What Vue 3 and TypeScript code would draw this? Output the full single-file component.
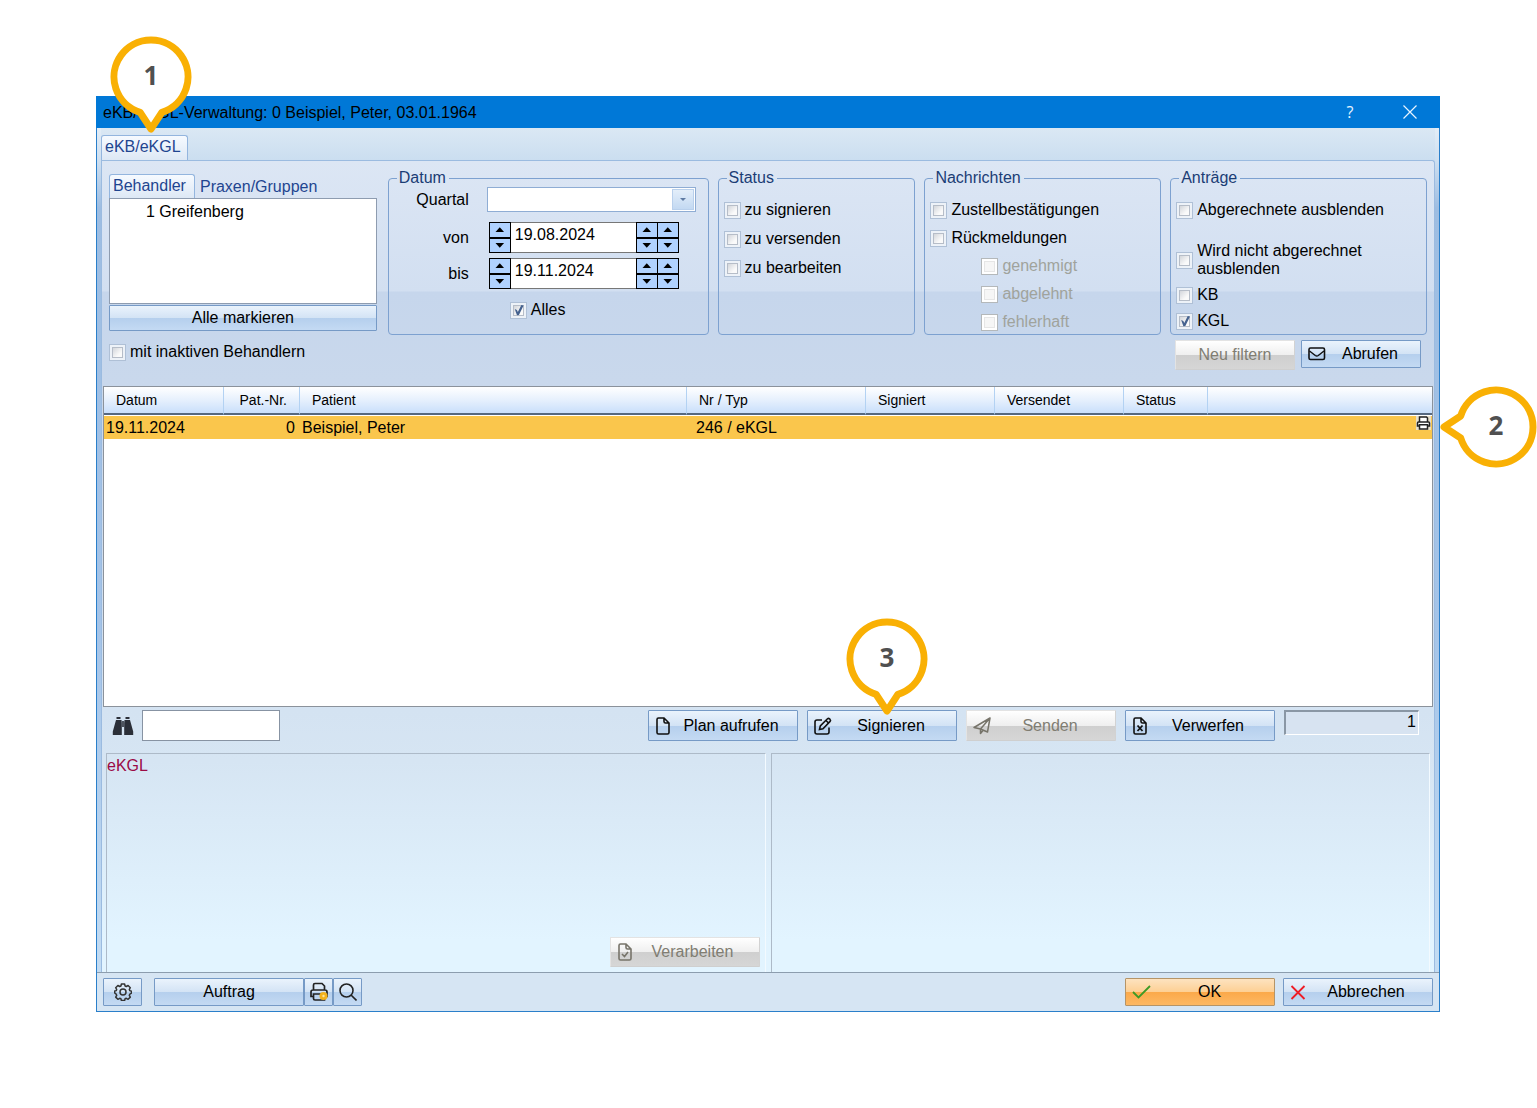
<script setup lang="ts">
import { reactive, ref } from 'vue'

interface Option {
  id: string
  label: string
  checked: boolean
  disabled?: boolean
}

interface Plan {
  date: string
  patientNo: number
  patient: string
  type: string
  signed: string
  sent: string
  status: string
}

const statusOptions = reactive<Option[]>([
  { id: 'st-sign', label: 'zu signieren', checked: false },
  { id: 'st-send', label: 'zu versenden', checked: false },
  { id: 'st-edit', label: 'zu bearbeiten', checked: false },
])

const messageOptions = reactive<Option[]>([
  { id: 'ms-delivery', label: 'Zustellbestätigungen', checked: false },
  { id: 'ms-reply', label: 'Rückmeldungen', checked: false },
  { id: 'ms-approved', label: 'genehmigt', checked: false, disabled: true },
  { id: 'ms-rejected', label: 'abgelehnt', checked: false, disabled: true },
  { id: 'ms-faulty', label: 'fehlerhaft', checked: false, disabled: true },
])

const requestOptions = reactive<Option[]>([
  { id: 'rq-billed', label: 'Abgerechnete ausblenden', checked: false },
  { id: 'rq-unbilled', label: 'Wird nicht abgerechnet ausblenden', checked: false },
  { id: 'rq-kb', label: 'KB', checked: false },
  { id: 'rq-kgl', label: 'KGL', checked: true },
])

const dates = reactive([
  { id: 'date-from', label: 'von', value: '19.08.2024' },
  { id: 'date-to', label: 'bis', value: '19.11.2024' },
])

const plans: Plan[] = [
  { date: '19.11.2024', patientNo: 0, patient: 'Beispiel, Peter', type: '246 / eKGL', signed: '', sent: '', status: '' },
]

const quarter = ref('')
const allDates = ref(true)
const inactive = ref(false)
const search = ref('')
</script>

<template>
  <main class="stage">
    <section class="window">
      <header class="titlebar">
        <h1>eKB/eKGL-Verwaltung: 0 Beispiel, Peter, 03.01.1964</h1>
        <button type="button" class="help" aria-label="Hilfe">?</button>
        <button type="button" class="close" aria-label="Schließen">
          <svg width="14" height="14" viewBox="0 0 14 14"><path d="M.5 .5l13 13M13.5 .5l-13 13" fill="none" stroke="#e8f4ff" stroke-width="1.2" /></svg>
        </button>
      </header>

      <div class="body">
        <nav class="strip"><button type="button" class="tab">eKB/eKGL</button></nav>

        <div class="panel">
          <div class="filters">
            <div class="doctors">
              <div class="subtabs">
                <button type="button" class="tab">Behandler</button>
                <button type="button" class="tab idle">Praxen/Gruppen</button>
              </div>
              <ul class="list"><li>1 Greifenberg</li></ul>
              <button type="button" class="btn mark">Alle markieren</button>
            </div>

            <fieldset>
              <legend>Datum</legend>
              <div class="dates">
                <div class="line">
                  <label for="quarter">Quartal</label>
                  <div class="combo">
                    <select id="quarter" v-model="quarter"><option value=""></option></select>
                    <span class="drop"></span>
                  </div>
                </div>
                <div v-for="d in dates" :key="d.id" class="line">
                  <label :for="d.id">{{ d.label }}</label>
                  <div class="spin">
                    <span class="pair"><button type="button" class="up" aria-label="Tag vor"></button><button type="button" class="down" aria-label="Tag zurück"></button></span>
                    <input :id="d.id" v-model="d.value" type="text" />
                    <span class="pair"><button type="button" class="up" aria-label="Monat vor"></button><button type="button" class="down" aria-label="Monat zurück"></button></span>
                    <span class="pair"><button type="button" class="up" aria-label="Jahr vor"></button><button type="button" class="down" aria-label="Jahr zurück"></button></span>
                  </div>
                </div>
                <label class="check all" for="all-dates"><input id="all-dates" v-model="allDates" type="checkbox" />Alles</label>
              </div>
            </fieldset>

            <fieldset>
              <legend>Status</legend>
              <div class="options status">
                <label v-for="o in statusOptions" :key="o.id" class="check" :for="o.id"><input :id="o.id" v-model="o.checked" type="checkbox" />{{ o.label }}</label>
              </div>
            </fieldset>

            <fieldset>
              <legend>Nachrichten</legend>
              <div class="options messages">
                <label v-for="o in messageOptions" :key="o.id" class="check" :class="{ off: o.disabled }" :for="o.id"><input :id="o.id" v-model="o.checked" type="checkbox" :disabled="o.disabled" />{{ o.label }}</label>
              </div>
            </fieldset>

            <fieldset>
              <legend>Anträge</legend>
              <div class="options requests">
                <label v-for="o in requestOptions" :key="o.id" class="check" :for="o.id"><input :id="o.id" v-model="o.checked" type="checkbox" /><span>{{ o.label }}</span></label>
              </div>
            </fieldset>
          </div>

          <div class="subfilters">
            <label class="check" for="inactive"><input id="inactive" v-model="inactive" type="checkbox" />mit inaktiven Behandlern</label>
            <button type="button" class="btn small tall" disabled><span>Neu filtern</span></button>
            <button type="button" class="btn small">
              <svg class="icon" width="18" height="14" viewBox="0 0 18 14"><rect x="1" y="1" width="15.500" height="11.500" rx="1.500" fill="none" stroke="#111" stroke-width="1.600" /><path d="M1.500 4L7.300 8.500q1.500 1 3 0L16 4" fill="none" stroke="#111" stroke-width="1.500" /></svg>
              <span>Abrufen</span>
            </button>
          </div>

          <div class="results">
            <table>
              <colgroup>
                <col class="c-date" /><col class="c-no" /><col class="c-patient" /><col class="c-type" />
                <col class="c-signed" /><col class="c-sent" /><col class="c-status" /><col />
              </colgroup>
              <thead>
                <tr>
                  <th>Datum</th><th class="num">Pat.-Nr.</th><th>Patient</th><th>Nr / Typ</th>
                  <th>Signiert</th><th>Versendet</th><th>Status</th><th></th>
                </tr>
              </thead>
              <tbody>
                <tr v-for="p in plans" :key="p.type">
                  <td>{{ p.date }}</td>
                  <td class="num">{{ p.patientNo }}</td>
                  <td>{{ p.patient }}</td>
                  <td class="type">{{ p.type }}</td>
                  <td>{{ p.signed }}</td>
                  <td>{{ p.sent }}</td>
                  <td>{{ p.status }}</td>
                  <td class="print">
                    <svg width="15" height="14" viewBox="0 0 15 14"><rect width="15" height="14" fill="#e8e0cc" /><path d="M3.500 6V1h7l1 1v4M3.500 10H1.500V7q0-1 1-1h10q1 0 1 1v3H11.500M3.500 8.700h8V13h-8z" fill="#fff" stroke="#222" stroke-width="1.500" /></svg>
                  </td>
                </tr>
              </tbody>
            </table>
          </div>

          <div class="toolbar">
            <label class="find" for="search" aria-label="Suchen">
              <svg width="22" height="20" viewBox="0 0 22 20" fill="#2b2f38"><path d="M4.500 1h4v2h-4zM13.500 1h4v2h-4zM4 4h5.500l.3 3v12H.8v-3.500zM18 4h-5.500l-.3 3v12h9v-3.500zM10.200 5h1.600v6h-1.600z" /></svg>
            </label>
            <input id="search" v-model="search" type="text" class="search" />
            <div class="actions">
              <button type="button" class="btn">
                <svg class="icon" width="14" height="18" viewBox="0 0 14 18"><path d="M1 2.500q0-1.500 1.500-1.500H8l5 5v9.500q0 1.500-1.500 1.500h-9Q1 17 1 15.500zM8 1v3.500Q8 6 9.500 6H13" fill="none" stroke="#111" stroke-width="1.600" /></svg>
                <span>Plan aufrufen</span>
              </button>
              <div class="anchor">
                <button type="button" class="btn">
                  <svg class="icon" width="18" height="18" viewBox="0 0 18 18" fill="none" stroke="#111" stroke-width="1.600"><path d="M8 3H3Q1 3 1 5v10q0 2 2 2h10q2 0 2-2v-4.500" /><path d="M5.500 12.500l.8-3.500 7.200-7.200q1-.9 2 0l.6.7q.9 1 0 1.900L9 11.700zM12 3.500L14.500 6" /></svg>
                  <span>Signieren</span>
                </button>
                <div class="bubble signing">
                  <svg width="82" height="98" viewBox="0 0 82 98"><path d="M30 76.300A37 37 0 1 1 52 76.300L41 93z" fill="#fff" stroke="#f9b004" stroke-width="7" stroke-linejoin="round" /></svg>
                  <b>3</b>
                </div>
              </div>
              <button type="button" class="btn" disabled>
                <svg class="icon" width="18" height="18" viewBox="0 0 18 18" fill="none" stroke="#77746a" stroke-width="1.500" stroke-linejoin="round"><path d="M1 10.500L17 1l-2.500 14-7-3zM17 1L7.500 12v4.500l2.700-3.300" /></svg>
                <span>Senden</span>
              </button>
              <button type="button" class="btn">
                <svg class="icon" width="14" height="18" viewBox="0 0 14 18"><path d="M1 2.500q0-1.500 1.500-1.500H8l5 5v9.500q0 1.500-1.500 1.500h-9Q1 17 1 15.500zM8 1v3.500Q8 6 9.500 6H13" fill="none" stroke="#111" stroke-width="1.600" /><path d="M4.500 8.500l5 5.500M9.500 8.500l-5 5.500" stroke="#111" stroke-width="1.800" /></svg>
                <span>Verwerfen</span>
              </button>
              <output class="count">1</output>
            </div>
          </div>

          <div class="details">
            <section class="detail">
              <p>eKGL</p>
              <button type="button" class="btn tall" disabled>
                <svg class="icon" width="14" height="18" viewBox="0 0 14 18" fill="none" stroke="#77746a" stroke-width="1.600"><path d="M1 2.500q0-1.500 1.500-1.500H8l5 5v9.500q0 1.500-1.500 1.500h-9Q1 17 1 15.500zM8 1v3.500Q8 6 9.500 6H13M4 11l2.500 2.500L10 9" /></svg>
                <span>Verarbeiten</span>
              </button>
            </section>
            <section class="detail"></section>
          </div>
        </div>
      </div>

      <footer class="footer">
        <button type="button" class="btn tool gear" aria-label="Einstellungen">
          <svg width="18" height="18" viewBox="0 0 18 18" fill="none" stroke="#333" stroke-width="1.500" stroke-linejoin="round"><path d="M7.400 1h3.200l.5 2 1.200.5 1.800-1 2.200 2.200-1 1.800.5 1.100 1.700.6v2l-1.700 1-.5 1.200 1 1.700-2.200 2.200-1.800-1-1.200.5-.5 1.700H7.400l-.5-1.700-1.200-.5-1.800 1-2.200-2.200 1-1.700-.5-1.200L.7 10V8l1.500-.4.500-1.100-1-1.800 2.200-2.200 1.800 1L6.900 3z" /><circle cx="9" cy="9" r="3" /></svg>
        </button>
        <button type="button" class="btn order">Auftrag</button>
        <button type="button" class="btn tool" aria-label="Drucken">
          <svg width="20" height="20" viewBox="0 0 20 20"><path d="M4.500 8V3q0-1.500 1.500-1.500h7L15.500 4v4M4.500 14.500H2V10q0-2 2-2h12q2 0 2 2v4.500h-2.500M4.500 12h11v6H6q-1.500 0-1.500-1.500z" fill="none" stroke="#222" stroke-width="1.700" /><circle cx="14.500" cy="14" r="4" fill="#f2b21d" /><circle cx="14.500" cy="14" r="1.200" fill="#fbe3a0" /></svg>
        </button>
        <button type="button" class="btn tool" aria-label="Vorschau">
          <svg width="18" height="18" viewBox="0 0 18 18" fill="none" stroke="#222" stroke-width="1.600"><circle cx="7.500" cy="7.500" r="6.500" /><path d="M12 12l5.500 5.500" /></svg>
        </button>
        <button type="button" class="btn ok">
          <svg class="icon" width="19" height="14" viewBox="0 0 19 14"><path d="M1 7l5.500 5.500L18 1" fill="none" stroke="#3c9a26" stroke-width="1.800" /></svg>
          <span>OK</span>
        </button>
        <button type="button" class="btn">
          <svg class="icon" width="15" height="15" viewBox="0 0 15 15"><path d="M1 1l13 13M14 1L1 14" fill="none" stroke="#ee1c25" stroke-width="1.800" /></svg>
          <span>Abbrechen</span>
        </button>
      </footer>

      <div class="bubble first">
        <svg width="82" height="98" viewBox="0 0 82 98"><path d="M30 76.300A37 37 0 1 1 52 76.300L41 93z" fill="#fff" stroke="#f9b004" stroke-width="7" stroke-linejoin="round" /></svg>
        <b>1</b>
      </div>
      <div class="bubble row">
        <svg width="98" height="82" viewBox="0 0 98 82"><path d="M21.700 30A37 37 0 1 1 21.700 52L5 41z" fill="#fff" stroke="#f9b004" stroke-width="7" stroke-linejoin="round" /></svg>
        <b>2</b>
      </div>
    </section>
  </main>
</template>

<style>
body {
  margin: 0;
  background: #fff;
}
</style>

<style scoped>
* {
  box-sizing: border-box;
}

.stage {
  padding: 96px 97px 97px 96px;
  font: 16px/18px "Liberation Sans", Arial, sans-serif;
  color: #000;
}

button,
input,
select {
  margin: 0;
  font: inherit;
  color: inherit;
}

.window {
  position: relative;
  border: 1px solid #2a7fca;
  border-top: 0;
  background: #d6e5f3;
}

.titlebar {
  display: flex;
  align-items: center;
  height: 32px;
  margin: 0 -1px;
  padding: 0 16px 0 7px;
  background: #0078d7;
}

.titlebar h1 {
  flex: 1;
  margin: 0;
  padding-top: 2px;
  font-size: 16px;
  font-weight: normal;
}

.titlebar button {
  display: flex;
  align-items: center;
  justify-content: center;
  height: 32px;
  padding: 0;
  border: 0;
  background: none;
  color: #e8f4ff;
}

.help {
  width: 32px;
  margin-right: 30px;
  font-family: "Open Sans", sans-serif;
}

.close {
  width: 28px;
}

.body {
  padding: 0 4px;
  background: linear-gradient(#e3edf7, #cfe0f1 32px, #9dbde2 80px, #a5c4e8 500px, #c3dcf3);
}

.strip {
  display: flex;
  align-items: flex-end;
  height: 32px;
  background: linear-gradient(#dbe8f4, #cbdef0);
}

.tab {
  height: 24px;
  padding: 0 8px 2px 3px;
  border: 1px solid #93b5de;
  border-bottom: 0;
  border-radius: 3px 3px 0 0;
  background: linear-gradient(#f6faff, #dde8f5);
  color: #1f4590;
  white-space: nowrap;
}

.strip .tab {
  height: 25px;
  padding-right: 6px;
}

.tab.idle {
  padding: 0 4px;
  border-color: transparent;
  background: none;
}

.panel {
  padding-top: 8px;
  border: 1px solid #9bbbe0;
  border-bottom: 0;
  border-radius: 0 3px 0 0;
  background: linear-gradient(#dce6f4, #d2dff1 130px, #c6d6ec 131px, #c9d8ec 220px, #d4e3f2 550px, #d6e5f3 600px, #e2f4ff 780px);
}

.filters {
  display: grid;
  grid-template-columns: 270fr 321fr 198fr 237fr 257fr;
  gap: 9px;
  padding: 0 7px;
}

.doctors {
  display: flex;
  flex-direction: column;
  padding: 5px 2px 4px 0;
}

.subtabs {
  display: flex;
}

.list {
  height: 106px;
  margin: 0 0 1px;
  padding: 4px 36px;
  border: 1px solid #8e9cb0;
  background: #fff;
  list-style: none;
}

.btn {
  display: flex;
  align-items: center;
  width: 150px;
  height: 31px;
  padding: 0 6px;
  border: 1px solid #769ac6;
  border-radius: 1px;
  background: linear-gradient(#eaf3fc, #d3e3f5 50%, #b5cfed 51%, #c4daf3);
  white-space: nowrap;
}

.btn span {
  flex: 1;
  text-align: center;
}

.btn .icon {
  flex: 0 0 16px;
  overflow: visible;
}

.btn:disabled {
  border-color: #e3e3e3 #d2d2d2 #cfcfcf #e3e3e3;
  background: linear-gradient(#fff, #efefef 50%, #cfcfcf 51%, #d6d6d6);
  color: #807d72;
}

.btn.mark {
  justify-content: center;
  width: 100%;
  height: 26px;
}

.btn.small {
  width: 120px;
  height: 28px;
}

.btn.tall {
  height: 30px;
}

fieldset {
  display: block;
  min-width: 0;
  margin: 0;
  padding: 0;
  border: 1px solid #7da1d0;
  border-radius: 4px;
}

legend {
  margin-left: 8px;
  padding: 0 3px 0 2px;
  color: #1b3d75;
}

.dates {
  display: flex;
  flex-direction: column;
  gap: 5px;
}

.line {
  display: flex;
  align-items: center;
}

.line:first-child {
  margin-bottom: 5px;
}

.line > label {
  width: 80px;
  margin-right: 20px;
  text-align: right;
}

.combo {
  position: relative;
  width: 209px;
  margin-left: -2px;
}

.combo select {
  display: block;
  width: 100%;
  height: 25px;
  border: 1px solid #8fadd4;
  border-radius: 0;
  background: #fff;
  appearance: none;
}

.drop {
  position: absolute;
  top: 2px;
  right: 2px;
  display: flex;
  align-items: center;
  justify-content: center;
  width: 22px;
  height: 21px;
  border: 1px solid #b9d0ec;
  background: linear-gradient(#e3eefa, #c3d9f2);
  pointer-events: none;
}

.drop::after {
  border: 3px solid transparent;
  border-top: 3px solid #5f7ba3;
  border-bottom: 0;
  content: "";
}

.spin {
  display: flex;
  width: 190px;
  height: 31px;
}

.spin input {
  flex: 1;
  min-width: 0;
  padding: 0 4px 6px;
  border: 1px solid #777;
  border-width: 1px 0;
  background: #fff;
}

.pair {
  display: flex;
  flex: 0 0 22px;
  flex-direction: column;
  border: 1px solid #000;
}

.pair + .pair {
  flex-basis: 21px;
  border-left: 0;
}

.pair button {
  display: flex;
  flex: 1;
  align-items: center;
  justify-content: center;
  padding: 0;
  border: 0;
  background: #b0d2ff;
}

.pair .down {
  border-top: 2px solid #000;
}

.up::after,
.down::after {
  width: 9px;
  height: 5px;
  background: #000;
  clip-path: polygon(50% 0, 100% 100%, 0 100%);
  content: "";
}

.down::after {
  clip-path: polygon(0 0, 100% 0, 50% 100%);
}

.check {
  display: flex;
  align-items: center;
  gap: 4px;
}

.check.all {
  margin: 7px 0 0 121px;
}

.check input {
  position: relative;
  flex: 0 0 17px;
  width: 17px;
  height: 17px;
  border: 1px solid #afc0d6;
  background: #edf2f8;
  appearance: none;
}

.check input::before {
  position: absolute;
  inset: 2px;
  border: 1px solid #b6bdc8;
  background: linear-gradient(135deg, #d3d6db, #fafafa 70%);
  content: "";
}

.check input:checked::after {
  position: absolute;
  inset: 2px;
  background: #45628f;
  clip-path: polygon(18% 40%, 38% 50%, 46% 68%, 78% 5%, 98% 10%, 56% 95%, 38% 98%);
  content: "";
}

.check.off {
  color: #a0a39c;
}

.check.off input {
  border-color: #b4b8ba;
  background: #fff;
}

.check.off input::before {
  border-color: #e6e6e6;
  background: #f6f6f6;
}

.options {
  display: flex;
  flex-direction: column;
  gap: 10px;
  padding: 14px 5px 3px;
}

.options.status {
  gap: 11px;
}

.options .off {
  padding-left: 51px;
}

.options.requests {
  gap: 8px;
}

.requests .check:first-child {
  margin-bottom: 15px;
}

.requests .check span {
  max-width: 195px;
  margin-right: -20px;
}

.subfilters {
  display: flex;
  align-items: flex-start;
  gap: 6px;
  padding: 5px 13px 16px 7px;
}

.subfilters .check {
  height: 24px;
  margin-right: auto;
}

.results {
  min-height: 321px;
  margin: 0 1px;
  border: 1px solid #8b929b;
  background: #fff;
}

table {
  width: 100%;
  border-collapse: separate;
  border-spacing: 0;
  table-layout: fixed;
}

.c-date {
  width: 120px;
}

.c-no {
  width: 76px;
}

.c-patient {
  width: 387px;
}

.c-type {
  width: 179px;
}

.c-signed,
.c-sent {
  width: 129px;
}

.c-status {
  width: 84px;
}

th {
  height: 28px;
  padding: 0 12px;
  border-right: 1px solid #b3d2f3;
  border-bottom: 2px solid #56687f;
  background: linear-gradient(#fff, #e6f0fd 50%, #c9dffb);
  font-size: 14px;
  font-weight: normal;
  text-align: left;
}

th:last-child {
  border-right: 0;
}

td {
  height: 24px;
  padding: 0 3px 0 2px;
  border-top: 1px solid #fff;
  background: #fac64c;
}

td.type {
  padding-left: 9px;
}

td.num {
  padding-right: 5px;
}

.num {
  text-align: right;
}

.print {
  padding: 0 1px 0 0;
  text-align: right;
  vertical-align: top;
}

.print svg {
  display: inline-block;
  vertical-align: top;
}

.toolbar {
  display: flex;
  align-items: flex-start;
  padding: 3px 15px 12px 10px;
}

.find {
  display: flex;
  align-items: center;
  height: 31px;
  margin-right: 8px;
}

.search {
  width: 138px;
  height: 31px;
  padding: 0 4px;
  border: 1px solid #8793a3;
  background: #fff;
}

.actions {
  display: flex;
  gap: 9px;
  margin-left: auto;
}

.anchor {
  position: relative;
}

.count {
  width: 135px;
  height: 25px;
  padding: 1px 2px;
  border: 2px solid #8a97a5;
  border-right: 1px solid #fff;
  border-bottom: 1px solid #fff;
  background: #d7e3f1;
  text-align: right;
}

.details {
  display: flex;
  gap: 5px;
  padding: 0 4px;
}

.detail {
  display: flex;
  flex: 1;
  flex-direction: column;
  justify-content: space-between;
  min-height: 219px;
  padding: 3px 5px 5px 0;
  border: 1px solid #adbac8;
  border-right-color: #f3faff;
  border-bottom: 0;
}

.detail p {
  margin: 0;
  color: #9b0a45;
}

.detail .btn {
  align-self: flex-end;
}

.footer {
  display: flex;
  align-items: center;
  height: 39px;
  padding: 0 6px;
  border-top: 1px solid #8c9dae;
  background: #d6e5f3;
}

.footer .btn {
  height: 28px;
}

.footer .tool {
  justify-content: center;
  width: 29px;
  padding: 0;
}

.footer .tool svg {
  flex: none;
}

.footer .gear {
  width: 39px;
  margin-right: 12px;
}

.footer .order {
  justify-content: center;
}

.footer .ok {
  margin: 0 8px 0 auto;
  border-color: #b59467;
  background: linear-gradient(#fde3c0, #fdcf93 50%, #fba94a 51%, #fdb863);
}

.bubble {
  position: absolute;
  pointer-events: none;
}

.bubble svg {
  display: block;
}

.bubble b {
  position: absolute;
  top: 23px;
  left: 0;
  width: 82px;
  font: bold 26px/32px "Open Sans", "Noto Sans", sans-serif;
  color: #505050;
  text-align: center;
}

.first {
  top: -60px;
  left: 13px;
}

.row {
  top: 290px;
  right: -98px;
}

.row b {
  left: 16px;
}

.signing {
  top: -92px;
  left: 39px;
}
</style>
